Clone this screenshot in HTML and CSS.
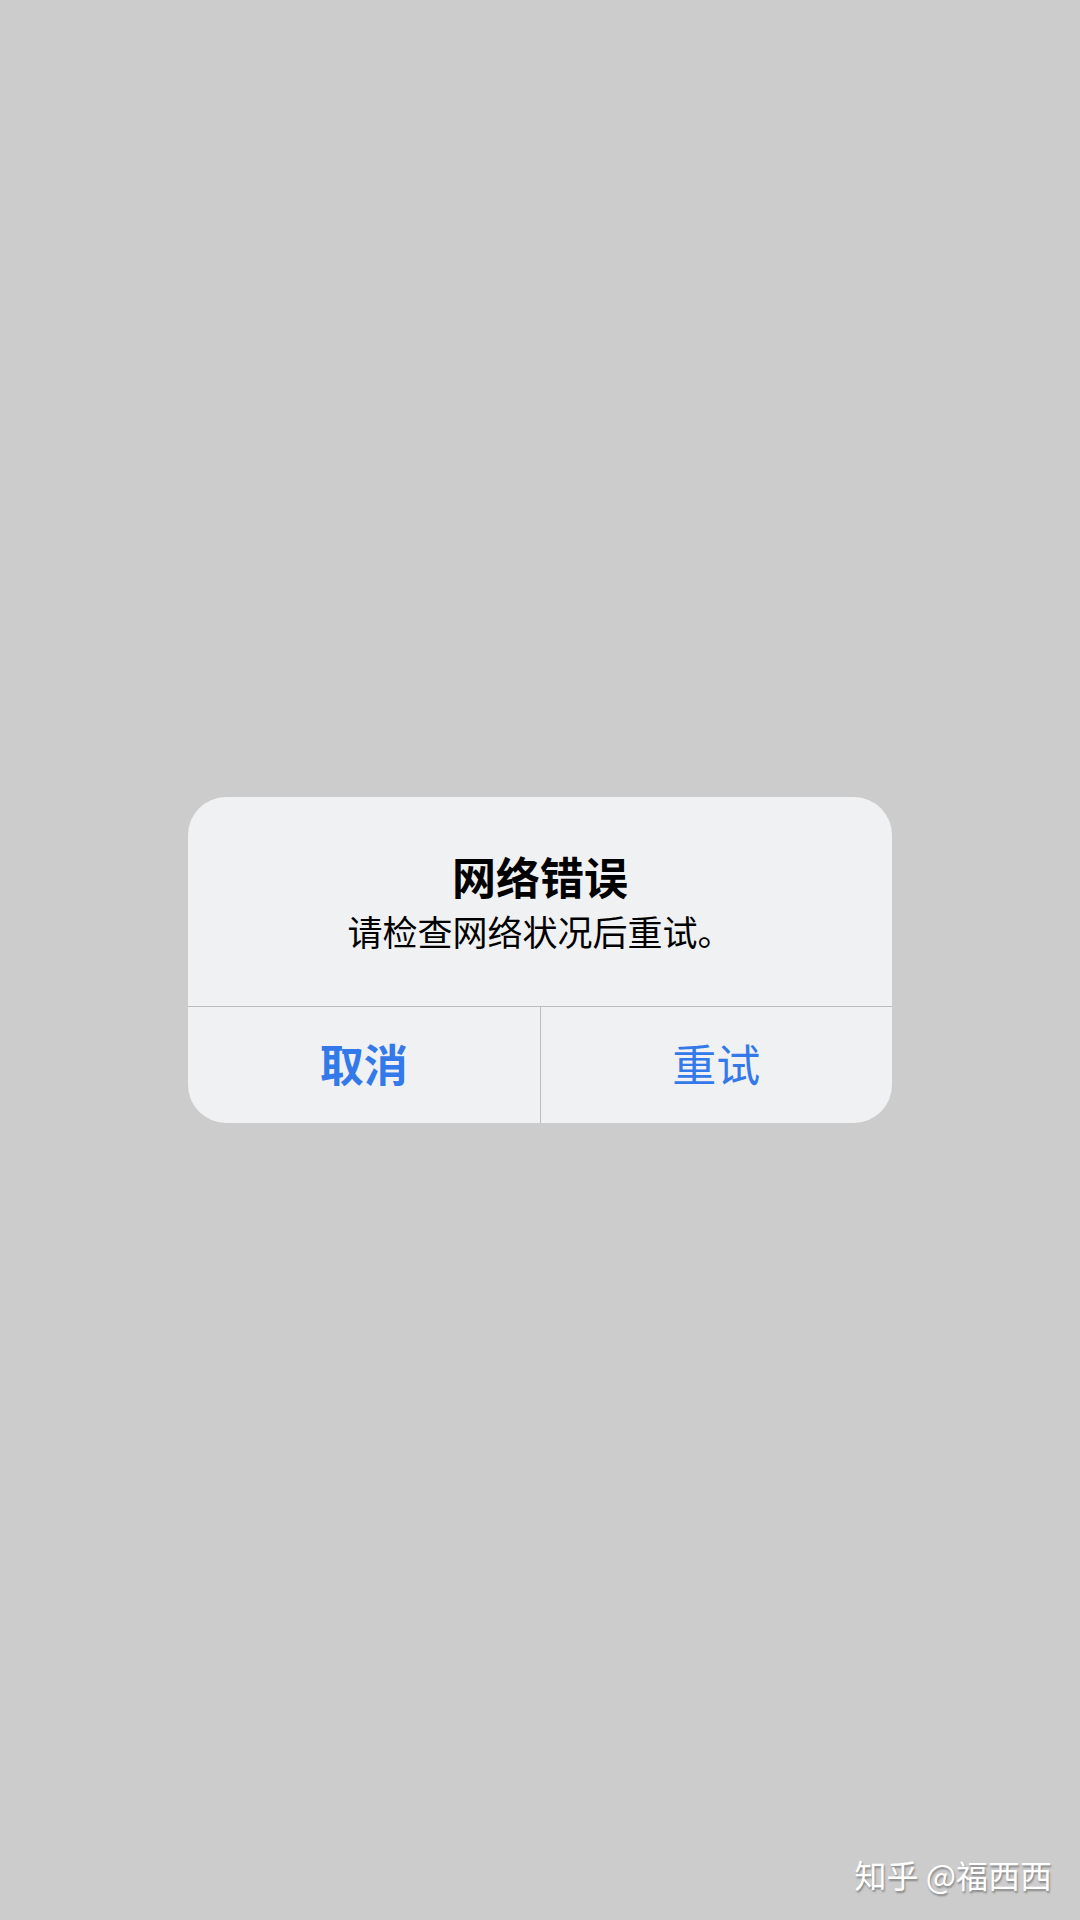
FILE: index.html
```html
<!DOCTYPE html>
<html lang="zh-CN">
<head>
  <meta charset="UTF-8">
  <meta name="viewport" content="width=device-width, initial-scale=1.0">
  <title>网络错误</title>
  <link rel="stylesheet" href="styles.css">
</head>
<body>
  <div class="screen">
    <div class="alert">
      <div class="alert-body">
        <h2 class="alert-title">网络错误</h2>
        <p class="alert-message">请检查网络状况后重试。</p>
      </div>
      <div class="alert-actions">
        <button class="alert-btn alert-btn-cancel">取消</button>
        <button class="alert-btn">重试</button>
      </div>
    </div>
    <div class="watermark">知乎 @福西西</div>
  </div>
</body>
</html>
```

FILE: styles.css
```css
html, body {
  margin: 0;
  padding: 0;
}
body {
  font-family: 'Noto Sans CJK SC', 'Noto Sans', sans-serif;
  background-color: #cccccc;
  color: #000;
}
.screen {
  position: relative;
  width: 1080px;
  height: 1920px;
  display: flex;
  align-items: center;
  justify-content: center;
}
.alert {
  width: 704px;
  background-color: #f0f1f3;
  border-radius: 38px;
  overflow: hidden;
}
.alert-body {
  padding: 53px 30px 52px;
  text-align: center;
}
.alert-title {
  margin: 0;
  font-size: 44px;
  line-height: 52px;
  font-weight: 700;
}
.alert-message {
  margin: 6px 0 0;
  font-size: 35px;
  line-height: 46px;
  font-weight: 400;
}
.alert-actions {
  display: flex;
  border-top: 1px solid #bcbcbf;
}
.alert-btn {
  flex: 1;
  height: 116px;
  padding: 0 0 4px;
  border: none;
  background: transparent;
  font-family: inherit;
  font-size: 44px;
  font-weight: 400;
  color: #3479e9;
}
.alert-btn + .alert-btn {
  border-left: 1px solid #bcbcbf;
}
.alert-btn-cancel {
  font-weight: 700;
}
.watermark {
  position: absolute;
  right: 28px;
  bottom: 24px;
  font-size: 32px;
  line-height: 44px;
  color: #fff;
  text-shadow: 1px 2px 2px rgba(0, 0, 0, 0.35);
}
```
